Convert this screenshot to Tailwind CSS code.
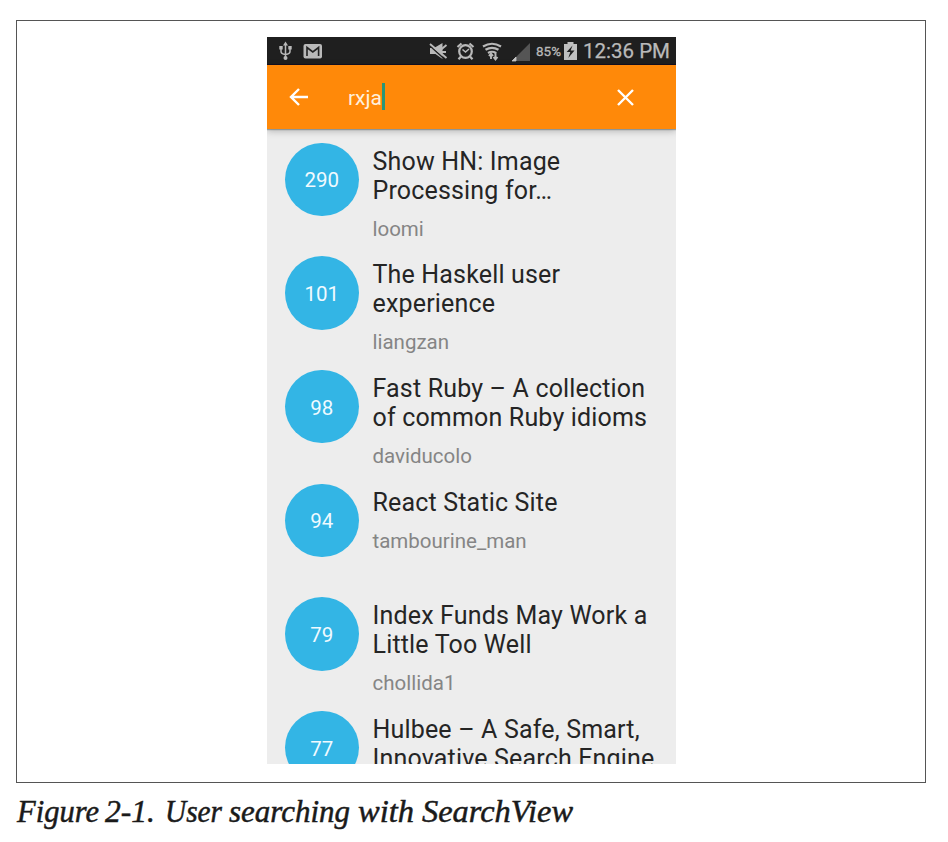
<!DOCTYPE html>
<html lang="en">
<head>
<meta charset="utf-8">
<title>User searching with SearchView</title>
<script src="https://cdn.jsdelivr.net/npm/@tailwindcss/browser@4"></script>
</head>
<body class="bg-white w-[948px] h-[842px] overflow-hidden pt-[20px] pl-[16px]">
<figure>
  <div class="w-[910px] h-[763px] border border-[#555] pt-[16px] pl-[250px]">
    <div class="w-[409px] h-[727px] bg-[#ededed] overflow-hidden font-[Roboto,sans-serif]">
      <div class="h-[28px] bg-[#1f1f1f] border-b border-[#140f20] flex items-center text-[#b9b9b9]">
        <svg class="w-[409px] h-[28px]" viewBox="0 0 409 28" fill="none" stroke="#b9b9b9">
          <g stroke-width="1.5"><path d="M18.500 7v14M14 11v3.500q0 2.500 4.500 3M23 11v3.500q0 2.500-4.500 3"/><path fill="#b9b9b9" stroke="none" d="M18.500 4.500l2.500 4h-5zM12.300 9h3.400v3.400h-3.400zM21.300 9h3.400v3.400h-3.400z"/><circle cx="18.500" cy="21" r="2" fill="#b9b9b9" stroke="none"/></g>
          <rect x="36.500" y="7" width="18.500" height="14.500" rx="2" fill="#b9b9b9" stroke="none"/>
          <path d="M40 19v-8.500l5.800 4.500 5.800-4.500v8.500" stroke="#222" stroke-width="1.600"/>
          <path d="M163 11h4l8.500-5v16l-7-5h-5.500z" fill="#b9b9b9" stroke="none"/><path d="M161.500 7.500l17 15.500" stroke="#1f1f1f" stroke-width="1.500"/><path d="M163 7l16.500 14M179.500 8l-6 5M175 15h4" stroke-width="1.900"/>
          <circle cx="198.500" cy="14.500" r="6.300" stroke-width="2.200"/><path d="M195.500 12.500l3 2.500 3.500-3" stroke-width="1.600"/><path d="M190.500 10l4-3.500M206.500 10l-4-3.500M194 19.500l-2.500 2.800M203 19.500l2.500 2.800" stroke-width="2.200"/>
          <path d="M216 9.500q9-5.500 18 0M218.500 12.800q6.500-4 13 0M221 16q4-2.500 8 0" stroke-width="2.200"/><path d="M224 22v-5M222 19l2-2.500 2 2.500M228.500 15v7M226.500 20l2 2.500 2-2.500" stroke-width="1.900"/>
          <path d="M263 6v18h-18z" fill="#555" stroke="none"/><path d="M249 20v4h-4z" fill="#c5c5c5" stroke="#c5c5c5" stroke-width=".8"/>
          <text x="269" y="19" font-size="13" textLength="25" lengthAdjust="spacingAndGlyphs" fill="#b9b9b9" stroke="#b9b9b9" stroke-width=".3">85%</text>
          <path d="M297 7h3.500v-2h6v2h3.500v16h-13z" fill="#c0c0c0" stroke="none"/><path d="M305.500 8.500l-5.800 6.500h3.600l-2 6 6.200-7.500h-3.800z" fill="#1f1f1f" stroke="none"/>
          <text x="316" y="21" font-size="21" textLength="87" lengthAdjust="spacingAndGlyphs" fill="#bababa" stroke="#bababa" stroke-width=".25">12:36 PM</text>
        </svg>
      </div>
      <div class="relative z-10 h-[64px] bg-[#ff8909] shadow-[0_1px_1px_rgba(90,100,100,.5),0_2px_7px_rgba(0,0,0,.25)] flex items-center">
        <svg class="ml-[22px] w-[20px] h-[18px]" viewBox="0 0 20 18" fill="none" stroke="#fff" stroke-width="2.400"><path d="M19 9H2M10 1L2 9l8 8"/></svg>
        <span class="ml-[39px] mt-[2px] text-[21px] leading-[26px] text-[#fff0dd]">rxja</span>
        <span class="w-[3px] h-[27px] -mt-[1px] bg-[#299778]"></span>
        <svg class="ml-auto mr-[42px] w-[17px] h-[17px]" viewBox="0 0 17 17" fill="none" stroke="#fff" stroke-width="2.400"><path d="M1 1l15 15M16 1L1 16"/></svg>
      </div>
      <ul class="pt-[13.500px] text-[25px] leading-[29px] tracking-[.17px] text-[#252525] whitespace-nowrap">
        <li class="flex h-[113.700px] pl-[18px]"><div class="w-[73.500px] h-[73.500px] shrink-0 rounded-full bg-[#33b5e5] flex items-center justify-center text-[20.500px] tracking-[0px] text-[#f0faff] pt-[3px]">290</div><div class="pl-[14px] pt-[4px]"><p>Show HN: Image<br>Processing for…</p><p class="mt-[10px] text-[20.500px] tracking-[0px] text-[#858585]">loomi</p></div></li>
        <li class="flex h-[113.700px] pl-[18px]"><div class="w-[73.500px] h-[73.500px] shrink-0 rounded-full bg-[#33b5e5] flex items-center justify-center text-[20.500px] tracking-[0px] text-[#f0faff] pt-[3px]">101</div><div class="pl-[14px] pt-[4px]"><p>The Haskell user<br>experience</p><p class="mt-[10px] text-[20.500px] tracking-[0px] text-[#858585]">liangzan</p></div></li>
        <li class="flex h-[113.700px] pl-[18px]"><div class="w-[73.500px] h-[73.500px] shrink-0 rounded-full bg-[#33b5e5] flex items-center justify-center text-[20.500px] tracking-[0px] text-[#f0faff] pt-[3px]">98</div><div class="pl-[14px] pt-[4px]"><p>Fast Ruby – A collection<br>of common Ruby idioms</p><p class="mt-[10px] text-[20.500px] tracking-[0px] text-[#858585]">daviducolo</p></div></li>
        <li class="flex h-[113.700px] pl-[18px]"><div class="w-[73.500px] h-[73.500px] shrink-0 rounded-full bg-[#33b5e5] flex items-center justify-center text-[20.500px] tracking-[0px] text-[#f0faff] pt-[3px]">94</div><div class="pl-[14px] pt-[4px]"><p>React Static Site</p><p class="mt-[10px] text-[20.500px] tracking-[0px] text-[#858585]">tambourine_man</p></div></li>
        <li class="flex h-[113.700px] pl-[18px]"><div class="w-[73.500px] h-[73.500px] shrink-0 rounded-full bg-[#33b5e5] flex items-center justify-center text-[20.500px] tracking-[0px] text-[#f0faff] pt-[3px]">79</div><div class="pl-[14px] pt-[4px]"><p>Index Funds May Work a<br>Little Too Well</p><p class="mt-[10px] text-[20.500px] tracking-[0px] text-[#858585]">chollida1</p></div></li>
        <li class="flex h-[113.700px] pl-[18px]"><div class="w-[73.500px] h-[73.500px] shrink-0 rounded-full bg-[#33b5e5] flex items-center justify-center text-[20.500px] tracking-[0px] text-[#f0faff] pt-[3px]">77</div><div class="pl-[14px] pt-[4px]"><p>Hulbee – A Safe, Smart,<br>Innovative Search Engine</p></div></li>
      </ul>
    </div>
  </div>
  <figcaption>
    <svg class="w-[600px] h-[50px]" viewBox="0 0 600 50" font-family="'Liberation Serif',serif" font-style="italic" font-size="32" fill="#1a1a1a" stroke="#1a1a1a" stroke-width=".5"><text y="39"><tspan x="1" textLength="82" lengthAdjust="spacingAndGlyphs">Figure</tspan> <tspan x="89" textLength="50" lengthAdjust="spacingAndGlyphs">2-1.</tspan> <tspan x="149" textLength="57" lengthAdjust="spacingAndGlyphs">User</tspan> <tspan x="213" textLength="121" lengthAdjust="spacingAndGlyphs">searching</tspan> <tspan x="342" textLength="56" lengthAdjust="spacingAndGlyphs">with</tspan> <tspan x="406" textLength="151" lengthAdjust="spacingAndGlyphs">SearchView</tspan></text></svg>
  </figcaption>
</figure>
</body>
</html>
